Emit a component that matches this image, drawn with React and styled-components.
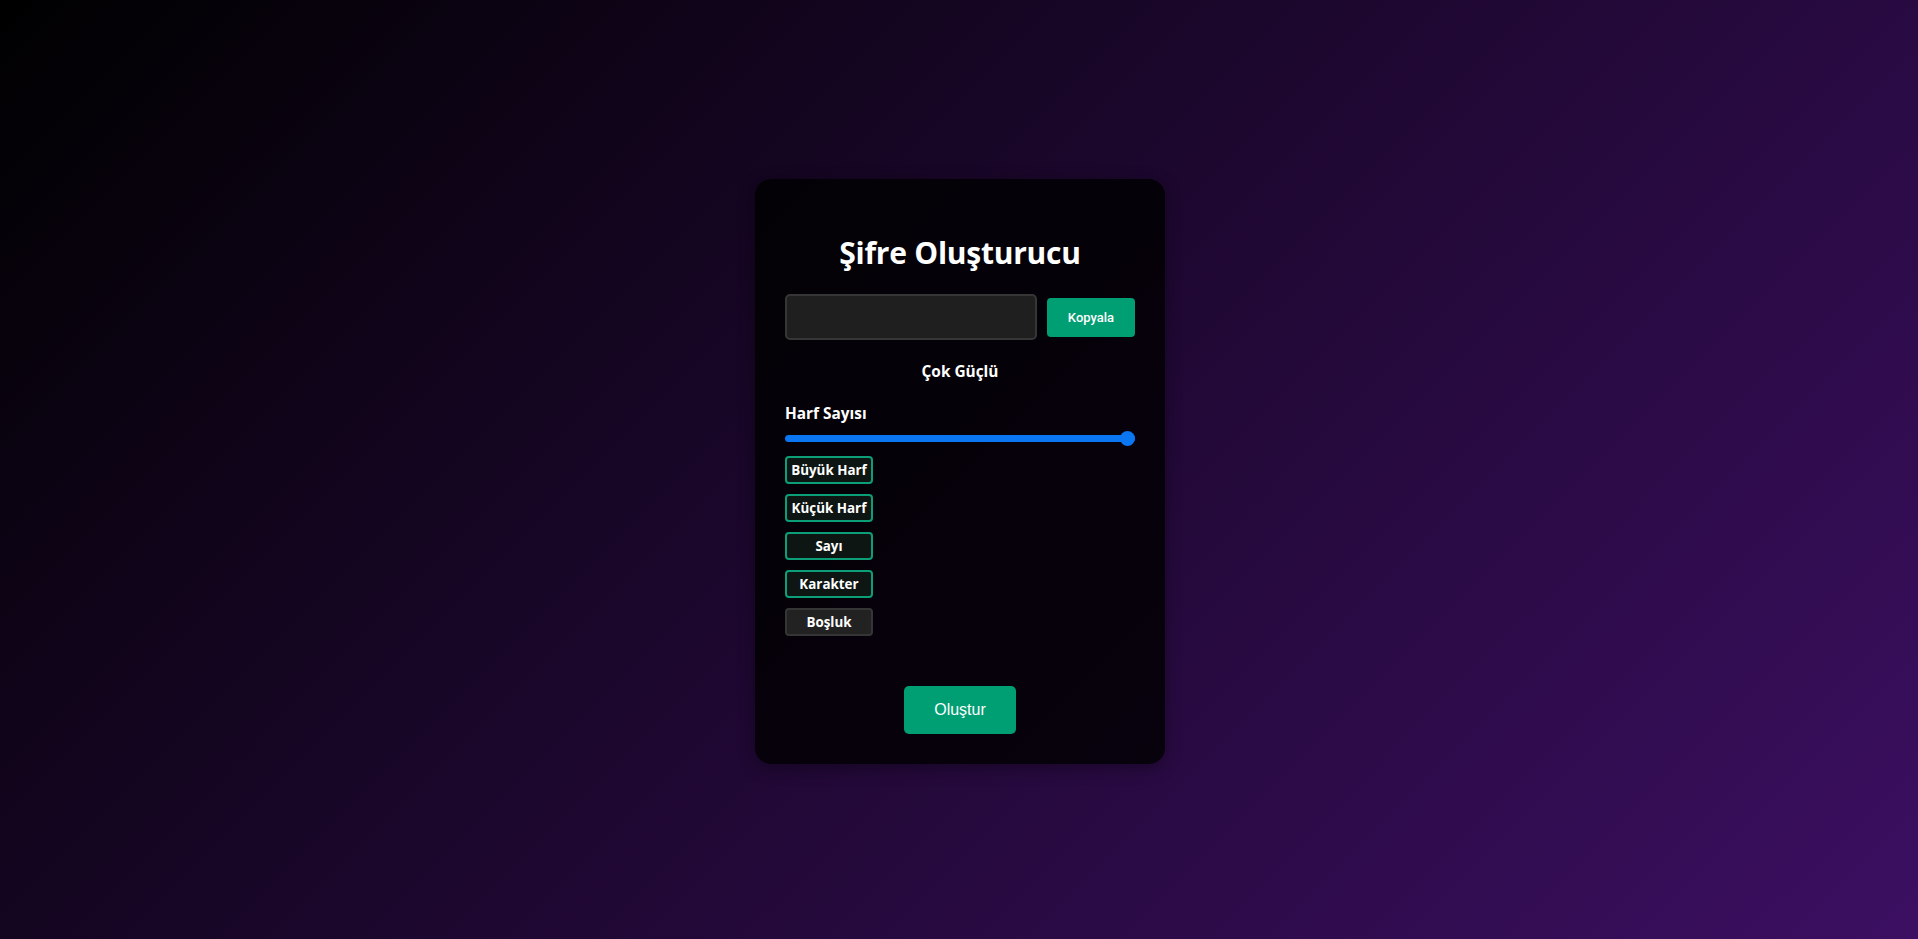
import React, { useState } from "react";
import styled, { createGlobalStyle } from "styled-components";

const Global = createGlobalStyle`
  * { box-sizing: border-box; }
  html, body { margin: 0; padding: 0; }
  body {
    font-family: "Open Sans", "Noto Sans", sans-serif;
    background: linear-gradient(135deg, #000000 0%, #3c0f62 100%);
    min-height: 939px;
  }
`;

const Page = styled.div`
  width: 100%;
  min-height: 939px;
  display: flex;
  justify-content: center;
  padding: 179px 0 0 2px;
`;

const Card = styled.div`
  width: 410px;
  height: 585px;
  background: rgba(0, 0, 0, 0.8);
  border-radius: 16px;
  box-shadow: 0 4px 16px rgba(0, 0, 0, 0.35);
  padding: 52px 30px 30px;
  display: flex;
  flex-direction: column;
`;

const Title = styled.h1`
  margin: 0;
  color: #ffffff;
  font-family: "Open Sans", sans-serif;
  font-weight: 700;
  font-size: 30px;
  line-height: 44px;
  text-align: center;
  letter-spacing: -0.25px;
`;

const OutputRow = styled.div`
  display: flex;
  align-items: center;
  gap: 10px;
  margin-top: 19px;
`;

const Output = styled.input`
  width: 252px;
  height: 46px;
  background: #1f1f1f;
  border: 2px solid #363636;
  border-radius: 5px;
  color: #fff;
  font-size: 16px;
  padding: 0 10px;
  outline: none;
`;

const CopyButton = styled.button`
  width: 88px;
  height: 39px;
  background: #009e73;
  border: none;
  border-radius: 4px;
  color: #fff;
  font-family: Roboto, sans-serif;
  font-weight: 500;
  font-size: 13px;
  cursor: pointer;
`;

const Strength = styled.div`
  margin-top: 22px;
  text-align: center;
  color: #fff;
  font-weight: 700;
  font-size: 15.4px;
  line-height: 20px;
`;

const Label = styled.div`
  margin-top: 22px;
  color: #fff;
  font-weight: 700;
  font-size: 15.4px;
  line-height: 20px;
`;

const Range = styled.input`
  -webkit-appearance: none;
  appearance: none;
  width: 350px;
  height: 15px;
  margin: 7px 0 0;
  background: transparent;
  &::-webkit-slider-runnable-track {
    height: 7px;
    border-radius: 4px;
    background: #0a76f2;
  }
  &::-webkit-slider-thumb {
    -webkit-appearance: none;
    width: 15px;
    height: 15px;
    border-radius: 50%;
    background: #0a76f2;
    margin-top: -4px;
    border: none;
  }
`;

const Options = styled.div`
  display: flex;
  flex-direction: column;
  gap: 10px;
  margin-top: 10px;
`;

const Option = styled.label`
  width: 88px;
  height: 28px;
  display: flex;
  align-items: center;
  justify-content: center;
  border-radius: 4px;
  border: 2px solid ${(p) => (p.$on ? "#0c9e76" : "#353535")};
  background: ${(p) => (p.$on ? "#0d1613" : "#222222")};
  color: #fff;
  font-weight: 700;
  font-size: 13.4px;
  white-space: nowrap;
  cursor: pointer;
  user-select: none;
`;

const Footer = styled.div`
  display: flex;
  justify-content: center;
  margin-top: auto;
`;

const GenerateButton = styled.button`
  width: 112px;
  height: 48px;
  background: #009e73;
  border: none;
  border-radius: 5px;
  color: #fff;
  font-family: "Liberation Sans", Arial, sans-serif;
  font-size: 16px;
  cursor: pointer;
`;

const initial = [
  { key: "upper", label: "Büyük Harf", on: true },
  { key: "lower", label: "Küçük Harf", on: true },
  { key: "num", label: "Sayı", on: true },
  { key: "sym", label: "Karakter", on: true },
  { key: "space", label: "Boşluk", on: false },
];

export default function App() {
  const [opts, setOpts] = useState(initial);
  const [len, setLen] = useState(50);
  const toggle = (k) =>
    setOpts((o) => o.map((x) => (x.key === k ? { ...x, on: !x.on } : x)));
  return (
    <>
      <Global />
      <Page>
        <Card>
          <Title>Şifre Oluşturucu</Title>
          <OutputRow>
            <Output readOnly value="" />
            <CopyButton>Kopyala</CopyButton>
          </OutputRow>
          <Strength>Çok Güçlü</Strength>
          <Label>Harf Sayısı</Label>
          <Range
            type="range"
            min="4"
            max="50"
            value={len}
            onChange={(e) => setLen(Number(e.target.value))}
          />
          <Options>
            {opts.map((o) => (
              <Option key={o.key} $on={o.on} onClick={() => toggle(o.key)}>
                {o.label}
              </Option>
            ))}
          </Options>
          <Footer>
            <GenerateButton>Oluştur</GenerateButton>
          </Footer>
        </Card>
      </Page>
    </>
  );
}
